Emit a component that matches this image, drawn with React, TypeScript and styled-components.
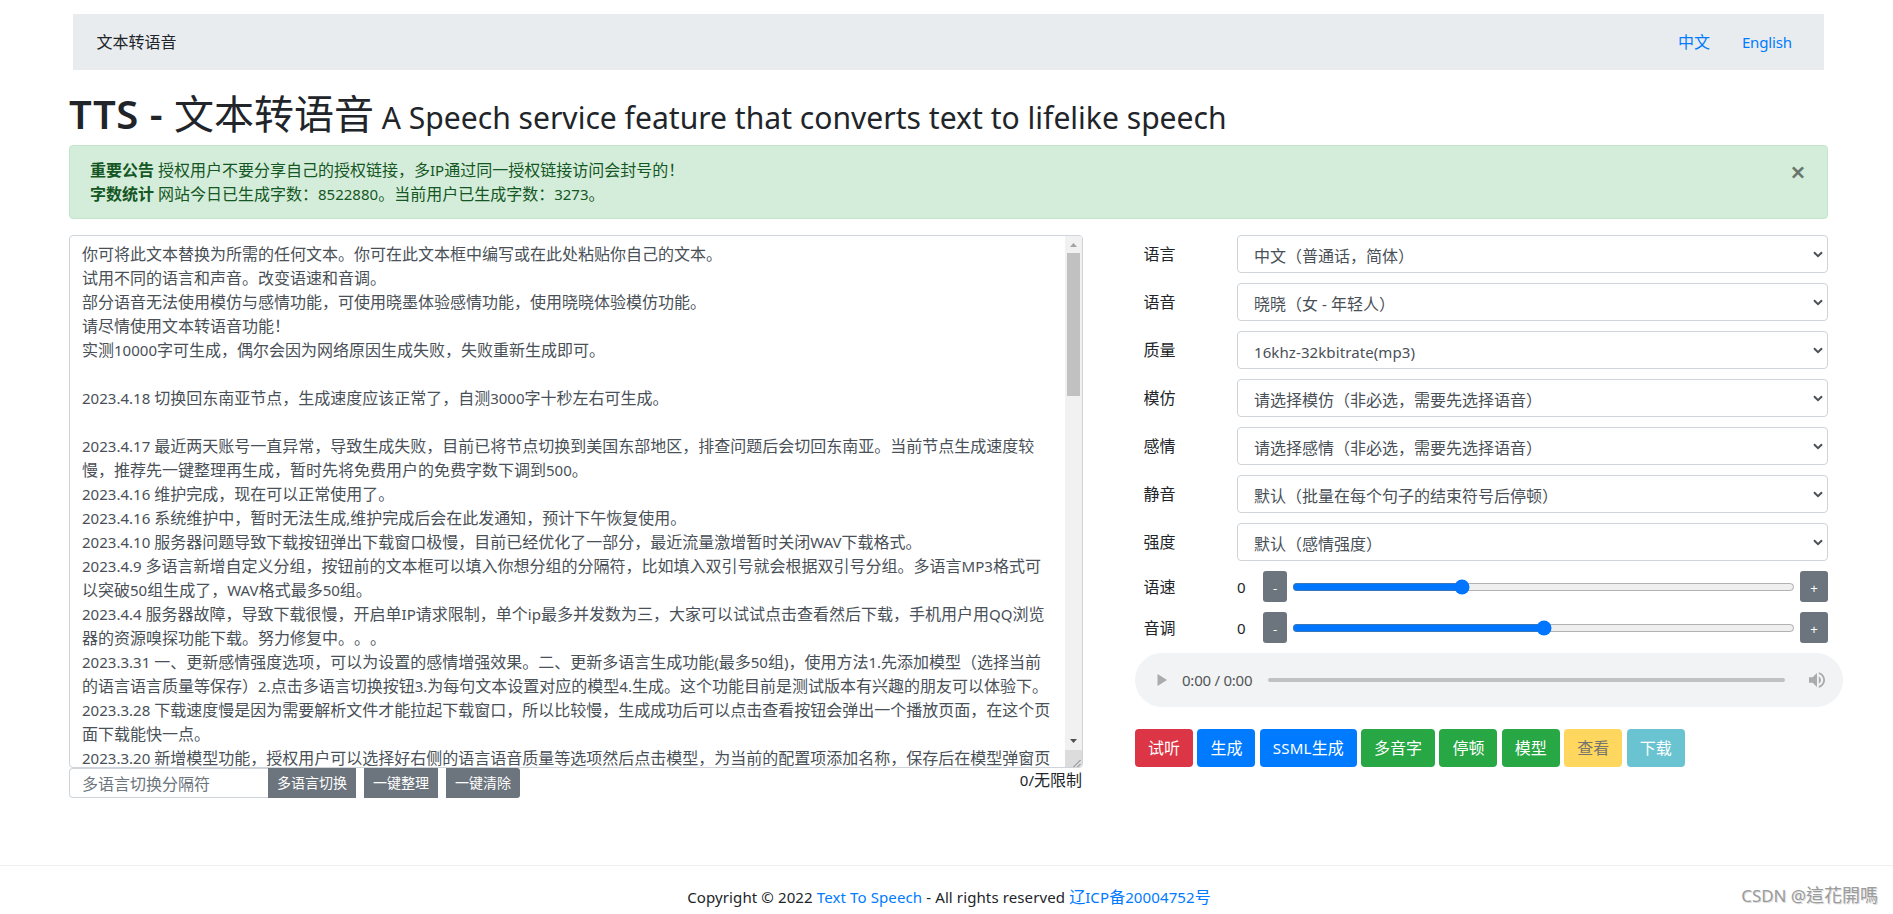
import React from "react";
import styled, { createGlobalStyle } from "styled-components";

const GlobalStyle = createGlobalStyle`
  *, *::before, *::after { box-sizing: border-box; }
  body {
    margin: 0;
    background: #fff;
    color: #212529;
    font-family: "Noto Sans CJK SC", "Noto Sans", sans-serif;
    font-size: 16px;
    line-height: 24px;
    text-spacing-trim: space-all;
    overflow: hidden;
  }
  button, input { font-family: inherit; font-weight: inherit; }
`;

const Latin = styled.span<{ $track?: number }>`
  font-family: "Noto Sans", sans-serif;
  font-size: 0.94em;
  line-height: 1;
  letter-spacing: ${(p) => p.$track ?? 0}px;
`;

/* Sets runs of Latin letters and digits in the Latin face. */
const Mixed = ({ children, track }: { children: string; track?: number }) => (
  <>
    {children.split(/([\x20-\x7e©]+)/).map((part, i) =>
      i % 2 ? (
        <Latin key={i} $track={track}>
          {part}
        </Latin>
      ) : (
        part
      )
    )}
  </>
);

const Page = styled.div`
  position: relative;
  display: flex;
  flex-direction: column;
  height: 914px;
  overflow: hidden;
  white-space: pre;
`;

const Container = styled.main`
  width: 1759px;
  margin-left: 69px;
  height: 865px;
  padding-top: 14px;
`;

const NavBar = styled.nav`
  display: flex;
  justify-content: space-between;
  align-items: center;
  height: 56px;
  margin: 0 4px;
  padding: 0 32px 2px 23.5px;
  background: #e9ecef;
`;

const NavLinks = styled.div`
  display: flex;
  gap: 32px;
`;

const Link = styled.a`
  color: #007bff;
  text-decoration: none;
`;

const Title = styled.h1`
  height: 48px;
  margin: 18px 0 9px;
  font-size: 40px;
  line-height: 48px;
  font-weight: 400;
`;

const TitleLead = styled.span`
  font-family: "Noto Sans", sans-serif;
  font-weight: 600;
  line-height: 1;
  letter-spacing: 0.5px;
`;

const Subtitle = styled.small`
  font-size: 32px;
  line-height: 1;
`;

const Alert = styled.section`
  display: flex;
  justify-content: space-between;
  height: 74px;
  padding: 11px 20px;
  border: 1px solid #c3e6cb;
  border-radius: 4px;
  background: #d4edda;
  color: #155724;
`;

const Close = styled.button`
  width: 18px;
  height: 24px;
  margin-top: 3px;
  padding: 0;
  border: 0;
  background: none;
  color: #000;
  opacity: 0.5;
  font: 600 27px/24px "Noto Sans", sans-serif;
`;

const Columns = styled.div`
  display: flex;
  justify-content: space-between;
  margin-top: 16px;
`;

const Editor = styled.section`
  width: 1014px;
`;

const TextBox = styled.div`
  display: flex;
  height: 533px;
  border: 1px solid #ced4da;
  border-radius: 4px;
  overflow: hidden;
  color: #495057;
`;

const TextLines = styled.div`
  flex: 1;
  height: 531px;
  padding: 5px 0 0 12px;
  overflow: hidden;
`;

const TextLine = styled.div`
  height: 24px;
`;

const ScrollBar = styled.div`
  display: flex;
  flex-direction: column;
  align-items: center;
  width: 17px;
  background: #f1f1f1;
`;

const ScrollThumb = styled.div`
  width: 13px;
  height: 143px;
  background: #c1c1c1;
`;

const ScrollTrack = styled.div`
  flex: 1;
`;

const Resizer = styled.div`
  width: 17px;
  height: 17px;
  background: #dcdcdc;
`;

const Tools = styled.div`
  display: flex;
  align-items: flex-start;
`;

const Separator = styled.input`
  width: 199px;
  height: 30px;
  padding: 0 12px;
  border: 1px solid #ced4da;
  border-right: 0;
  border-radius: 4px 0 0 4px;
  outline: none;
  font-size: 16px;
  &::placeholder { color: #6c757d; opacity: 1; }
`;

const ToolButton = styled.button<{ $gap?: number; $last?: boolean }>`
  height: 30px;
  margin-left: ${(p) => p.$gap ?? 0}px;
  padding: 0 9px 1px;
  border: 0;
  border-radius: ${(p) => (p.$last ? "0 3px 3px 0" : "0")};
  background: #6c757d;
  color: #fff;
  font-size: 14px;
  line-height: 29px;
`;

const Counter = styled.div`
  margin: -1px 1px 0 auto;
`;

const Settings = styled.section`
  width: 693px;
`;

const Field = styled.div`
  display: flex;
  height: 38px;
  margin-bottom: 10px;
`;

const Label = styled.label`
  width: 102px;
  padding: 6px 0 0 8.5px;
`;

const SelectBox = styled.button`
  display: flex;
  flex: 1;
  align-items: center;
  justify-content: space-between;
  padding: 1px 4px 0 16px;
  border: 1px solid #ced4da;
  border-radius: 4px;
  background: #fff;
  color: #495057;
  font-size: 16px;
  line-height: 24px;
`;

const SliderRow = styled.div`
  display: flex;
  align-items: center;
  height: 31px;
  margin-bottom: 10px;
`;

const SliderLabel = styled.label`
  width: 102px;
  padding: 0 0 2px 8.5px;
`;

const SliderValue = styled.span`
  width: 26px;
  padding-bottom: 2px;
`;

const StepButton = styled.button<{ $w: number }>`
  flex: none;
  width: ${(p) => p.$w}px;
  height: 31px;
  padding: 0;
  border: 0;
  border-radius: 3px;
  background: #6c757d;
  color: #fff;
  font-size: 14px;
`;

const Range = styled.input`
  width: 503px;
  height: 16px;
  margin: 0 5px;
`;

const Player = styled.div`
  display: flex;
  align-items: center;
  width: 708px;
  height: 54px;
  padding-left: 22px;
  border-radius: 27px;
  background: #f1f3f4;
`;

const Time = styled.span`
  width: 86px;
  margin-left: 15px;
  padding-bottom: 2px;
  color: #545658;
`;

const Timeline = styled.div`
  width: 517px;
  height: 4px;
  margin-right: 24px;
  border-radius: 2px;
  background: #bfc1c2;
`;

const Actions = styled.div`
  display: flex;
  gap: 4.4px;
  margin-top: 22px;
`;

const ActionButton = styled.button<{ $bg: string; $fg?: string }>`
  height: 38px;
  padding: 0 13px 2px;
  border: 0;
  border-radius: 4px;
  background: ${(p) => p.$bg};
  color: ${(p) => p.$fg ?? "#fff"};
  font-size: 16px;
  line-height: 36px;
  white-space: nowrap;
`;

const Footer = styled.footer`
  height: 49px;
  padding: 18px 0 0 5px;
  border-top: 1px solid #f0f0f0;
  text-align: center;
`;

const Watermark = styled.div`
  position: absolute;
  right: 15px;
  bottom: 8px;
  color: #9b9b9b;
  font-family: "Noto Sans CJK TC", sans-serif;
  font-size: 18px;
  text-shadow: 1px 1px 0 #ddd;
`;

const lines = [
  "你可将此文本替换为所需的任何文本。你可在此文本框中编写或在此处粘贴你自己的文本。",
  "试用不同的语言和声音。改变语速和音调。",
  "部分语音无法使用模仿与感情功能，可使用晓墨体验感情功能，使用晓晓体验模仿功能。",
  "请尽情使用文本转语音功能！",
  "实测10000字可生成，偶尔会因为网络原因生成失败，失败重新生成即可。",
  "",
  "2023.4.18 切换回东南亚节点，生成速度应该正常了，自测3000字十秒左右可生成。",
  "",
  "2023.4.17 最近两天账号一直异常，导致生成失败，目前已将节点切换到美国东部地区，排查问题后会切回东南亚。当前节点生成速度较",
  "慢，推荐先一键整理再生成，暂时先将免费用户的免费字数下调到500。",
  "2023.4.16 维护完成，现在可以正常使用了。",
  "2023.4.16 系统维护中，暂时无法生成,维护完成后会在此发通知，预计下午恢复使用。",
  "2023.4.10 服务器问题导致下载按钮弹出下载窗口极慢，目前已经优化了一部分，最近流量激增暂时关闭WAV下载格式。",
  "2023.4.9 多语言新增自定义分组，按钮前的文本框可以填入你想分组的分隔符，比如填入双引号就会根据双引号分组。多语言MP3格式可",
  "以突破50组生成了，WAV格式最多50组。",
  "2023.4.4 服务器故障，导致下载很慢，开启单IP请求限制，单个ip最多并发数为三，大家可以试试点击查看然后下载，手机用户用QQ浏览",
  "器的资源嗅探功能下载。努力修复中。。。",
  "2023.3.31 一、更新感情强度选项，可以为设置的感情增强效果。二、更新多语言生成功能(最多50组)，使用方法1.先添加模型（选择当前",
  "的语言语言质量等保存）2.点击多语言切换按钮3.为每句文本设置对应的模型4.生成。这个功能目前是测试版本有兴趣的朋友可以体验下。",
  "2023.3.28 下载速度慢是因为需要解析文件才能拉起下载窗口，所以比较慢，生成成功后可以点击查看按钮会弹出一个播放页面，在这个页",
  "面下载能快一点。",
  "2023.3.20 新增模型功能，授权用户可以选择好右侧的语言语音质量等选项然后点击模型，为当前的配置项添加名称，保存后在模型弹窗页",
];

const fields = [
  ["语言", "中文（普通话，简体）"],
  ["语音", "晓晓（女 - 年轻人）"],
  ["质量", "16khz-32kbitrate(mp3)"],
  ["模仿", "请选择模仿（非必选，需要先选择语音）"],
  ["感情", "请选择感情（非必选，需要先选择语音）"],
  ["静音", "默认（批量在每个句子的结束符号后停顿）"],
  ["强度", "默认（感情强度）"],
];

const sliders = [
  { label: "语速", min: -100, max: 200 },
  { label: "音调", min: -50, max: 50 },
];

const actions = [
  { text: "试听", bg: "#dc3545" },
  { text: "生成", bg: "#007bff" },
  { text: "SSML生成", bg: "#007bff" },
  { text: "多音字", bg: "#28a745" },
  { text: "停顿", bg: "#28a745" },
  { text: "模型", bg: "#28a745" },
  { text: "查看", bg: "#ffd75e", fg: "#74756f" },
  { text: "下载", bg: "#6ac3d0" },
];

const Chevron = () => (
  <svg width="10" height="8" viewBox="0 0 10 8">
    <path d="M1 1.2 5 5.2 9 1.2" fill="none" stroke="#495057" strokeWidth="2" />
  </svg>
);

export default function App() {
  return (
    <Page>
      <GlobalStyle />
      <Container>
        <NavBar>
          <span>文本转语音</span>
          <NavLinks>
            <Link>中文</Link>
            <Link>
              <Mixed track={-0.15}>English</Mixed>
            </Link>
          </NavLinks>
        </NavBar>
        <Title>
          <TitleLead>TTS - </TitleLead>
          文本转语音
          <Subtitle>
            <Mixed>{" A Speech service feature that converts text to lifelike speech"}</Mixed>
          </Subtitle>
        </Title>
        <Alert>
          <div>
            <div>
              <strong>重要公告</strong>
              <Mixed>{" 授权用户不要分享自己的授权链接，多IP通过同一授权链接访问会封号的！"}</Mixed>
            </div>
            <div>
              <strong>字数统计</strong>
              <Mixed>{" 网站今日已生成字数：8522880。当前用户已生成字数：3273。"}</Mixed>
            </div>
          </div>
          <Close>×</Close>
        </Alert>
        <Columns>
          <Editor>
            <TextBox>
              <TextLines>
                {lines.map((line, i) => (
                  <TextLine key={i}>
                    <Mixed>{line}</Mixed>
                  </TextLine>
                ))}
              </TextLines>
              <ScrollBar>
                <svg width="17" height="17">
                  <path d="M5 11 8.5 7 12 11Z" fill="#a3a3a3" />
                </svg>
                <ScrollThumb />
                <ScrollTrack />
                <svg width="17" height="17">
                  <path d="M5 6 8.5 10 12 6Z" fill="#505050" />
                </svg>
                <Resizer>
                  <svg width="17" height="17">
                    <path d="M8 15.5 15.5 8M12 15.5 15.5 12" stroke="#7a7a7a" />
                  </svg>
                </Resizer>
              </ScrollBar>
            </TextBox>
            <Tools>
              <Separator placeholder="多语言切换分隔符" />
              <ToolButton>多语言切换</ToolButton>
              <ToolButton $gap={8}>一键整理</ToolButton>
              <ToolButton $gap={8} $last>
                一键清除
              </ToolButton>
              <Counter>
                <Mixed>0/无限制</Mixed>
              </Counter>
            </Tools>
          </Editor>
          <Settings>
            {fields.map(([label, value]) => (
              <Field key={label}>
                <Label>{label}</Label>
                <SelectBox>
                  <span>
                    <Mixed track={0.08}>{value}</Mixed>
                  </span>
                  <Chevron />
                </SelectBox>
              </Field>
            ))}
            {sliders.map((s) => (
              <SliderRow key={s.label}>
                <SliderLabel>{s.label}</SliderLabel>
                <SliderValue>
                  <Mixed>0</Mixed>
                </SliderValue>
                <StepButton $w={24}>
                  <Mixed>-</Mixed>
                </StepButton>
                <Range type="range" min={s.min} max={s.max} defaultValue={0} />
                <StepButton $w={28}>
                  <Mixed>+</Mixed>
                </StepButton>
              </SliderRow>
            ))}
            <Player>
              <svg width="10" height="12">
                <path d="M0.5 0 10 6 0.5 12Z" fill="#a9abac" />
              </svg>
              <Time>
                <Mixed track={-0.25}>0:00 / 0:00</Mixed>
              </Time>
              <Timeline />
              <svg width="16" height="16" viewBox="3 3 18 18">
                <path
                  d="M3 9v6h4l5 5V4L7 9H3zm13.5 3c0-1.77-1.02-3.29-2.5-4.03v8.05c1.48-.73 2.5-2.25 2.5-4.02zM14 3.23v2.06c2.89.86 5 3.54 5 6.71s-2.11 5.85-5 6.71v2.06c4.01-.91 7-4.49 7-8.77s-2.99-7.86-7-8.77z"
                  fill="#a9abac"
                />
              </svg>
            </Player>
            <Actions>
              {actions.map((a) => (
                <ActionButton key={a.text} $bg={a.bg} $fg={a.fg}>
                  <Mixed track={0.2}>{a.text}</Mixed>
                </ActionButton>
              ))}
            </Actions>
          </Settings>
        </Columns>
      </Container>
      <Footer>
        <Mixed track={0.1}>{"Copyright © 2022 "}</Mixed>
        <Link>
          <Mixed track={0.1}>Text To Speech</Mixed>
        </Link>
        <Mixed track={0.1}>{" - All rights reserved "}</Mixed>
        <Link>
          <Mixed track={0.1}>辽ICP备20004752号</Mixed>
        </Link>
      </Footer>
      <Watermark>
        <Mixed>CSDN @這花開嗎</Mixed>
      </Watermark>
    </Page>
  );
}
